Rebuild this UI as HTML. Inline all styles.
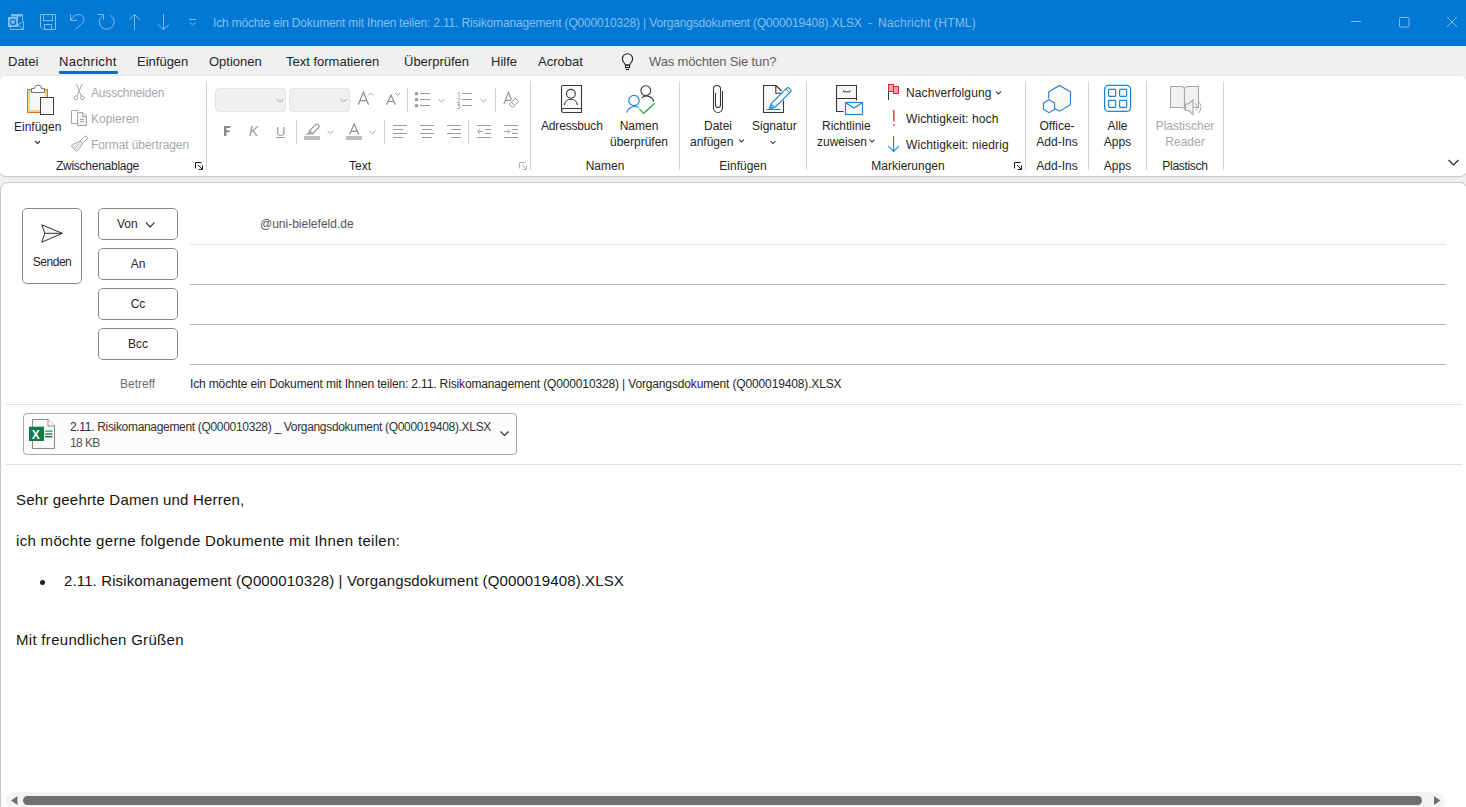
<!DOCTYPE html>
<html><head><meta charset="utf-8">
<style>
*{margin:0;padding:0;box-sizing:border-box}
html,body{width:1466px;height:807px;overflow:hidden;background:#f0f0f0;font-family:"Liberation Sans",sans-serif;color:#262626}
.a{position:absolute;white-space:nowrap;line-height:1}
#title{left:0;top:0;width:1466px;height:46px;background:#0078d4}
#ribbon{left:-1px;top:76px;width:1468px;height:100px;background:#fff;border-radius:7px;box-shadow:0 1px 0 #cbcbcb,0 2px 1px #e6e6e6,0 -1px 0 #e9e9e9}
#compose{left:0;top:182px;width:1468px;height:640px;background:#fff;border:1px solid #c8c8c8;border-radius:8px}
.m{top:55px;font-size:13px;color:#262626}
.r{font-size:12px;color:#262626}
.d{color:#a8a8a8}
.g{top:160px;font-size:12px;color:#262626}
.c{text-align:center}
.btn{position:absolute;border:1px solid #8a8a8a;border-radius:5px;background:#fff}
.ln{position:absolute;height:1px;background:#b3b3b3;left:190px;width:1256px}
.body{font-size:15px;color:#141414;letter-spacing:0.15px}
svg{position:absolute;left:0;top:0}
</style></head><body>
<div id="title" class="a"></div>
<div class="a" style="left:213px;top:17px;font-size:12px;color:#8abeea;letter-spacing:-0.17px">Ich möchte ein Dokument mit Ihnen teilen: 2.11. Risikomanagement (Q000010328) | Vorgangsdokument (Q000019408).XLSX&nbsp; -&nbsp; <span style="letter-spacing:0.2px">Nachricht (HTML)</span></div>

<div class="a m" style="left:8px">Datei</div>
<div class="a m" style="left:59px;color:#1a1a1a;letter-spacing:0.3px">Nachricht</div>
<div class="a" style="left:59px;top:71px;width:59px;height:3px;background:#0f6cbd;border-radius:1px"></div>
<div class="a m" style="left:137px">Einfügen</div>
<div class="a m" style="left:209px">Optionen</div>
<div class="a m" style="left:286px">Text formatieren</div>
<div class="a m" style="left:404px">Überprüfen</div>
<div class="a m" style="left:491px">Hilfe</div>
<div class="a m" style="left:538px">Acrobat</div>
<div class="a m" style="left:649px;color:#5f5f5f;letter-spacing:-0.15px">Was möchten Sie tun?</div>

<div id="ribbon" class="a"></div>

<!-- ribbon separators -->
<div class="a" style="left:206px;top:81px;width:1px;height:89px;background:#d2d2d2"></div>
<div class="a" style="left:530px;top:81px;width:1px;height:89px;background:#d2d2d2"></div>
<div class="a" style="left:679px;top:81px;width:1px;height:89px;background:#d2d2d2"></div>
<div class="a" style="left:806px;top:81px;width:1px;height:89px;background:#d2d2d2"></div>
<div class="a" style="left:1025px;top:81px;width:1px;height:89px;background:#d2d2d2"></div>
<div class="a" style="left:1088px;top:81px;width:1px;height:89px;background:#d2d2d2"></div>
<div class="a" style="left:1146px;top:81px;width:1px;height:89px;background:#d2d2d2"></div>
<div class="a" style="left:1223px;top:81px;width:1px;height:89px;background:#d2d2d2"></div>

<!-- text row seps -->
<div class="a" style="left:407px;top:88px;width:1px;height:24px;background:#d2d2d2"></div>
<div class="a" style="left:495px;top:88px;width:1px;height:24px;background:#d2d2d2"></div>
<div class="a" style="left:296px;top:120px;width:1px;height:24px;background:#d2d2d2"></div>
<div class="a" style="left:384px;top:120px;width:1px;height:24px;background:#d2d2d2"></div>
<div class="a" style="left:468px;top:120px;width:1px;height:24px;background:#d2d2d2"></div>
<!-- Zwischenablage -->
<div class="a r" style="left:14px;top:121px">Einfügen</div>
<div class="a r d" style="left:91px;top:87px;letter-spacing:-0.18px">Ausschneiden</div>
<div class="a r d" style="left:91px;top:113px">Kopieren</div>
<div class="a r d" style="left:91px;top:139px;letter-spacing:-0.08px">Format übertragen</div>
<div class="a g c" style="left:0px;width:195px;letter-spacing:-0.26px">Zwischenablage</div>

<!-- Text group -->
<div class="a" style="left:215px;top:88px;width:71px;height:24px;background:#f0f0f0;border:1px solid #e3e3e3;border-radius:4px"></div>
<div class="a" style="left:289px;top:88px;width:61px;height:24px;background:#f0f0f0;border:1px solid #e3e3e3;border-radius:4px"></div>
<div class="a g c" style="left:300px;width:120px">Text</div>

<!-- Namen -->
<div class="a r" style="left:541px;top:120px;letter-spacing:-0.17px">Adressbuch</div>
<div class="a r c" style="left:600px;top:120px;width:78px">Namen</div>
<div class="a r c" style="left:600px;top:136px;width:78px">überprüfen</div>
<div class="a g c" style="left:555px;width:100px">Namen</div>

<!-- Einfügen -->
<div class="a r" style="left:704px;top:120px">Datei</div>
<div class="a r" style="left:690px;top:136px">anfügen</div>
<div class="a r" style="left:752px;top:120px">Signatur</div>
<div class="a g c" style="left:693px;width:100px">Einfügen</div>

<!-- Markierungen -->
<div class="a r" style="left:822px;top:120px">Richtlinie</div>
<div class="a r" style="left:817px;top:136px">zuweisen</div>
<div class="a r" style="left:906px;top:87px;letter-spacing:0.1px">Nachverfolgung</div>
<div class="a r" style="left:906px;top:113px;letter-spacing:0.1px">Wichtigkeit: hoch</div>
<div class="a r" style="left:906px;top:139px;letter-spacing:0.1px">Wichtigkeit: niedrig</div>
<div class="a g c" style="left:858px;width:100px">Markierungen</div>

<!-- Add-Ins / Apps / Plastisch -->
<div class="a r c" style="left:1026px;top:120px;width:62px">Office-</div>
<div class="a r c" style="left:1026px;top:136px;width:62px">Add-Ins</div>
<div class="a g c" style="left:1026px;width:62px">Add-Ins</div>
<div class="a r c" style="left:1089px;top:120px;width:57px">Alle</div>
<div class="a r c" style="left:1089px;top:136px;width:57px">Apps</div>
<div class="a g c" style="left:1089px;width:57px">Apps</div>
<div class="a r c d" style="left:1147px;top:120px;width:76px">Plastischer</div>
<div class="a r c d" style="left:1147px;top:136px;width:76px">Reader</div>
<div class="a g c" style="left:1147px;width:76px;letter-spacing:-0.3px">Plastisch</div>

<div id="compose" class="a"></div>

<!-- compose -->
<div class="btn" style="left:22px;top:208px;width:60px;height:76px"></div>
<div class="a r c" style="left:22px;top:256px;width:60px;letter-spacing:-0.45px">Senden</div>
<div class="btn" style="left:98px;top:208px;width:80px;height:32px"></div>
<div class="a r" style="left:117px;top:218px">Von</div>
<div class="btn" style="left:98px;top:248px;width:80px;height:32px"></div>
<div class="a r c" style="left:98px;top:258px;width:80px">An</div>
<div class="btn" style="left:98px;top:288px;width:80px;height:32px"></div>
<div class="a r c" style="left:98px;top:298px;width:80px">Cc</div>
<div class="btn" style="left:98px;top:328px;width:80px;height:32px"></div>
<div class="a r c" style="left:98px;top:338px;width:80px">Bcc</div>

<div class="a r" style="left:260px;top:218px;color:#555">@uni-bielefeld.de</div>
<div class="ln" style="top:244px;background:#e3e3e3"></div>
<div class="ln" style="top:284px"></div>
<div class="ln" style="top:324px"></div>
<div class="ln" style="top:364px"></div>
<div class="a r" style="left:120px;top:378px;color:#6b6b6b">Betreff</div>
<div class="a r" style="left:190px;top:378px;color:#262626;letter-spacing:-0.145px">Ich möchte ein Dokument mit Ihnen teilen: 2.11. Risikomanagement (Q000010328) | Vorgangsdokument (Q000019408).XLSX</div>
<div class="a" style="left:6px;top:404px;width:1456px;height:1px;background:#e1e1e1"></div>

<div class="a" style="left:23px;top:413px;width:494px;height:42px;border:1px solid #a8a8a8;border-radius:4px;background:#fcfcfc"></div>
<div class="a r" style="left:70px;top:421px;color:#333;letter-spacing:-0.32px">2.11. Risikomanagement (Q000010328) _ Vorgangsdokument (Q000019408).XLSX</div>
<div class="a r" style="left:70px;top:437px;color:#555;letter-spacing:-0.6px">18 KB</div>
<div class="a" style="left:6px;top:464px;width:1456px;height:1px;background:#e1e1e1"></div>

<div class="a body" style="left:16px;top:492px;letter-spacing:0.19px">Sehr geehrte Damen und Herren,</div>
<div class="a body" style="left:16px;top:533px;letter-spacing:0.31px">ich möchte gerne folgende Dokumente mit Ihnen teilen:</div>
<div class="a" style="left:40px;top:580px;width:5px;height:5px;border-radius:50%;background:#1f1f1f"></div>
<div class="a body" style="left:64px;top:573px;letter-spacing:0.13px">2.11. Risikomanagement (Q000010328) | Vorgangsdokument (Q000019408).XLSX</div>
<div class="a body" style="left:16px;top:632px;letter-spacing:0.3px">Mit freundlichen Grüßen</div>

<!-- scrollbar -->
<div class="a" style="left:6px;top:792px;width:1439px;height:18px;background:#f3f3f3;border-radius:9px"></div>
<div class="a" style="left:23px;top:796px;width:1399px;height:9px;background:#707070;border-radius:5px"></div>

<svg width="1466" height="807" viewBox="0 0 1466 807">
<!-- title bar icons -->
<g fill="none" stroke="#80bceb" stroke-width="1">
  <path d="M11.5,16.5 V14.5 H22.5 V21"/>
  <path d="M11.5,15.5 H22.5" stroke-width="2"/>
  <path d="M17.5,14.5 V17" />
  <path d="M10.5,27 V29.5 H23.5 V21.5 L17.5,25"/>
  <path d="M18,25 L23.5,29.5"/>
</g>
<rect x="8" y="17" width="10" height="10" fill="#80bceb"/>
<circle cx="13" cy="22" r="2.6" fill="none" stroke="#0078d4" stroke-width="1.3"/>
<g fill="none" stroke="#80bceb" stroke-width="1">
  <path d="M40.5,14.5 H55.5 V29.5 H43 L40.5,27 Z"/>
  <path d="M43.5,14.5 V20.5 H52.5 V14.5"/>
  <path d="M44.5,29.5 V24.5 H51.5 V29.5"/>
  <path d="M70.5,14 V20.3 H77"/>
  <path d="M71,19.8 C73,16.3 75.5,14.5 78.5,14.5 C81.5,14.5 84,16.8 84,19.3 C84,21.3 83,22.8 81.5,24.2 L75.5,29.5"/>
  <path d="M110.3,15.3 A7.4,7.4 0 1 1 101.5,16.5"/>
  <path d="M98,14.5 H103.5 V20"/>
  <path d="M134.5,14.5 V30 M129.2,19.7 L134.5,14.5 L139.8,19.7"/>
  <path d="M163.5,14 V29.7 M158,24.4 L163.5,29.7 L169,24.4"/>
  <path d="M189,19.5 H196 M189.5,22.2 L192.6,25 L195.7,22.2"/>
  <path d="M1351,21.5 H1361"/>
  <rect x="1399.5" y="17.5" width="9.5" height="9.5" rx="1"/>
  <path d="M1447,17 L1457,27 M1457,17 L1447,27"/>
</g>

<!-- lightbulb -->
<path d="M625.5,65 L623.8,62.3 A5.1,5.1 0 1 1 631.2,62.3 L629.5,65 Z" fill="none" stroke="#1f1f1f" stroke-width="1.1"/>
<rect x="625.5" y="65.2" width="4" height="2.4" fill="none" stroke="#1f1f1f" stroke-width="1.1"/>
<path d="M626,69.5 H629" stroke="#1f1f1f" stroke-width="1.1"/>
<!-- Einfuegen paste -->
<rect x="27.5" y="89.5" width="20" height="23" fill="#f7f7f7" stroke="#e07512" stroke-width="1"/>
<rect x="29" y="91" width="17" height="20" fill="none" stroke="#f7d27c" stroke-width="2"/>
<path d="M31.5,88.5 H34.5 A3.5,3.5 0 0 1 41.5,88.5 H44.5 V92.5 H31.5 Z" fill="#fff" stroke="#737373"/>
<rect x="40.5" y="97.5" width="13" height="17" fill="#f9f9f9" stroke="#404040"/>
<path d="M35,141 L37.5,143.5 L40,141" fill="none" stroke="#333" stroke-width="1.1"/>

<!-- scissors / copy / brush -->
<g fill="none" stroke="#a6a6a6" stroke-width="1">
  <path d="M76.5,84 L81.2,96 M82,84 L77.2,96"/>
  <circle cx="75.8" cy="97.8" r="1.9"/>
  <circle cx="82.4" cy="97.8" r="1.9"/>
  <path d="M78,110.5 H71.5 V123.5 H77" />
  <path d="M77.5,112.5 H83 L86.5,116 V125.5 H77.5 Z" fill="#f4f4f4"/>
  <path d="M82.5,112.5 V116.5 H86.5"/>
  <path d="M80,119.5 H84 M80,121.5 H84"/>
  <path d="M84.6,136.6 Q85.8,135.4 87,136.6 Q88.2,137.8 87,139 L82.6,143.4 L80.2,141 Z"/>
  <path d="M80.2,141 L82.6,143.4 L81.6,145.2 Q79.6,148.8 76.6,151.4 L71.2,146 Q73.8,143.2 78.2,142.2 Z" fill="#ececec"/>
  <path d="M74,148.8 L79.5,143.5" stroke="#c4c4c4"/>
</g>
<path d="M1448.5,160 L1453.5,165 L1458.5,160" fill="none" stroke="#262626" stroke-width="1.2"/>

<!-- Text group icons -->
<g fill="none" stroke="#909090" stroke-width="1.2">
  <path d="M277,99.5 L280,102 L283,99.5" stroke="#a0a0a0" stroke-width="1"/>
  <path d="M340.5,99.3 L343.5,101.8 L346.5,99.3" stroke="#a0a0a0" stroke-width="1"/>
  <path d="M358.3,104.8 L363.4,92.2 L368.6,104.8 M360.2,100.6 H366.6"/>
  <path d="M368.2,95.5 L370.7,93 L373.2,95.5" stroke="#a0a0a0" stroke-width="1"/>
  <path d="M386.5,104.8 L391,95.2 L395.5,104.8 M388.2,101.5 H393.8"/>
  <path d="M395,93 L397.5,95.5 L400,93" stroke="#a0a0a0" stroke-width="1"/>
  <path d="M438.6,99.3 L441.5,101.8 L444.4,99.3" stroke="#a0a0a0" stroke-width="1"/>
  <path d="M480.5,99.3 L483.5,101.8 L486.5,99.3" stroke="#a0a0a0" stroke-width="1"/>
  <path d="M327.6,131 L330.5,133.7 L333.4,131" stroke="#a0a0a0" stroke-width="1"/>
  <path d="M369.5,131 L372.4,133.7 L375.3,131" stroke="#a0a0a0" stroke-width="1"/>
  <path d="M349.6,134.6 L354.1,124.1 L358.6,134.6 M351.2,131.3 H357"/>
  <path d="M309.6,130.6 L315.6,124.6 Q316.8,123.4 318,124.6 L318.6,125.2 Q319.8,126.4 318.6,127.6 L312.6,133.6 Z" stroke-width="1.1"/><path d="M309.6,130.6 L312.6,133.6 L311,134.8 H305.2 Q307.8,133.6 309.6,130.6 Z" fill="#ababab" stroke="none"/>
  <path d="M503.8,104.4 L508.4,92.4 L511.5,99.8 M505.2,100.3 H510.8"/>
  <path d="M515.3,98.3 L518.8,101.6 L512.4,107.6 L509.2,104.3 Z" stroke-width="1"/>
  <path d="M511.4,102.3 L514.6,105.5" stroke-width="1"/>
</g>
<g fill="#9a9a9a">
  <rect x="415" y="92.2" width="3" height="3"/>
  <rect x="415" y="98.2" width="3" height="3"/>
  <rect x="415" y="104.2" width="3" height="3"/>
  <rect x="420" y="93" width="10" height="1"/>
  <rect x="420" y="99" width="10" height="1"/>
  <rect x="420" y="105" width="10" height="1"/>
  <rect x="462" y="93" width="10" height="1"/>
  <rect x="462" y="99" width="10" height="1"/>
  <rect x="462" y="105" width="10" height="1"/>
  <rect x="304" y="136" width="16" height="4" fill="#bdbdbd"/>
  <rect x="346" y="136" width="16" height="4" fill="#bdbdbd"/>
  <rect x="276" y="137" width="9" height="1"/>
  <!-- align -->
  <rect x="393" y="125" width="14" height="1"/><rect x="393" y="129" width="10" height="1"/><rect x="393" y="133" width="14" height="1"/><rect x="393" y="137" width="10" height="1"/>
  <rect x="420" y="125" width="14" height="1"/><rect x="422" y="129" width="10" height="1"/><rect x="420" y="133" width="14" height="1"/><rect x="422" y="137" width="10" height="1"/>
  <rect x="447" y="125" width="14" height="1"/><rect x="451" y="129" width="10" height="1"/><rect x="447" y="133" width="14" height="1"/><rect x="451" y="137" width="10" height="1"/>
  <rect x="477" y="125" width="14" height="1"/><rect x="485" y="129" width="6" height="1"/><rect x="485" y="133" width="6" height="1"/><rect x="477" y="137" width="14" height="1"/>
  <rect x="504" y="125" width="14" height="1"/><rect x="512" y="129" width="6" height="1"/><rect x="512" y="133" width="6" height="1"/><rect x="504" y="137" width="14" height="1"/>
</g>
<g fill="none" stroke="#a8a8a8" stroke-width="1">
  <path d="M477.5,131.5 H483 M480,129 L477.5,131.5 L480,134"/>
  <path d="M504,131.5 H510 M507.5,129 L510,131.5 L507.5,134"/>
</g>
<path d="M457.6,93.2 L459,92.3 V97.2 M457.3,98.8 Q458.5,97.7 459.7,98.5 Q460.4,99.6 459,100.9 L457.3,102.8 H460.4 M457.3,104.3 H460 L458.5,106 Q460.6,106.2 460.3,107.6 Q459.6,109.1 457.2,108.5" fill="none" stroke="#a0a0a0" stroke-width="0.9"/>
<g font-family="Liberation Sans" fill="#8a8a8a">
  
  <text x="249" y="136" font-size="14" font-style="italic" fill="#9a9a9a">K</text>
  <text x="276" y="135.5" font-size="13" fill="#9a9a9a">U</text>
</g>
<path d="M224,126 H230.3 V128.1 H226.5 V130.2 H229.8 V132.3 H226.5 V136 H224 Z" fill="#8a8a8a"/>
<!-- dialog launchers -->
<g fill="none" stroke="#1a1a1a" stroke-width="1">
  <path d="M195.5,168.5 V162.5 H201.5 M198,165 L202,169 M198.5,169.5 H202.5 V165.5"/>
  <path d="M1014.5,168.5 V162.5 H1020.5 M1017,165 L1021,169 M1017.5,169.5 H1021.5 V165.5"/>
</g>
<g fill="none" stroke="#b5b5b5" stroke-width="1">
  <path d="M519.5,168.5 V162.5 H525.5 M522,165 L526,169 M522.5,169.5 H526.5 V165.5"/>
</g>

<!-- Namen icons -->
<g fill="none" stroke="#383838" stroke-width="1.1">
  <path d="M563,85.5 H581.5 V112.5 H563 A1.8,1.8 0 0 1 561.5,110.7 V87 A1.5,1.5 0 0 1 563,85.5 Z" fill="#fafafa"/>
  <path d="M561.5,110.5 A2,2 0 0 1 563.5,108.5 H581.5"/>
  <circle cx="570.9" cy="93.8" r="4.4"/>
  <path d="M564.3,104.8 A6.7,6.7 0 0 1 577.5,104.8"/>
  <circle cx="645.8" cy="90.6" r="4.9"/>
  <path d="M641.6,97.8 A7.5,7.5 0 0 1 653.8,101.8"/>
</g>
<g fill="none" stroke="#1e88d6" stroke-width="1.2">
  <circle cx="634" cy="100.5" r="5.2"/>
  <path d="M626.5,112.7 A8.5,8.5 0 0 1 638.8,107.6"/>
</g>
<path d="M639.3,108.8 L643.6,113.3 L654.7,103.2" fill="none" stroke="#2fa84f" stroke-width="1.2"/>

<!-- Einfuegen group icons -->
<path d="M715.5,93 V105 A2.5,2.5 0 0 0 720.5,105 V89 A3.5,3.5 0 0 0 713.5,89 V108 A4.5,4.5 0 0 0 722.5,108 V91" fill="none" stroke="#383838" stroke-width="1.1"/>
<path d="M763.5,85.5 H776 L781.5,91 L783.5,93 V112.5 H763.5 Z" fill="#f9f9f9" stroke="none"/>
<path d="M776,85.5 H763.5 V112.5 H783.5 V100.5 M776,85.5 L781.5,91 M775.8,85.5 V93.3 H781.5" fill="none" stroke="#383838" stroke-width="1.1"/>
<path d="M769.5,108.6 L771.5,103.3 L786.5,88.3 Q788,86.8 789.5,88.3 L790.3,89.1 Q791.8,90.6 790.3,92.1 L775.3,107 Z" fill="#fafafa" stroke="#2186d6" stroke-width="1.1"/>
<path d="M769.5,108.6 L771.3,104 L774.7,107.3 Z" fill="#8cc0ec" stroke="#2186d6" stroke-width="1"/>
<path d="M786,89 L789.8,92.8" stroke="#2186d6" stroke-width="1"/>
<path d="M766.5,109.5 H780.5" stroke="#2186d6" stroke-width="1.1"/>
<g fill="none" stroke="#262626" stroke-width="1.05">
  <path d="M739,139.5 L741.5,142 L744,139.5"/>
  <path d="M770.5,141 L773,143.5 L775.5,141"/>
  <path d="M869.5,139.5 L872,142 L874.5,139.5"/>
  <path d="M996,91.5 L998.5,94 L1001,91.5"/>
</g>

<!-- Markierungen -->
<path d="M843.5,111.5 H836.5 V85.5 H856.5 V100.5 M836.5,98.5 H856.5" fill="#f7f7f7" stroke="#383838" stroke-width="1.1"/>
<path d="M843.5,90.5 V91.8 H850 V90.5" fill="none" stroke="#383838" stroke-width="1"/>
<rect x="845.5" y="102.5" width="17" height="12" fill="#f7f7f7" stroke="#1e88d6" stroke-width="1.2"/>
<path d="M846,103 L854,108 L862,103" fill="none" stroke="#1e88d6" stroke-width="1.2"/>
<path d="M888.5,85 V100" stroke="#383838" stroke-width="1"/>
<rect x="888.5" y="84.5" width="5" height="7" fill="#f6a3aa" stroke="#d92b2b" stroke-width="1"/>
<rect x="893.5" y="86.5" width="5" height="7" fill="#f6a3aa" stroke="#d92b2b" stroke-width="1"/>
<rect x="893" y="110" width="1.6" height="11.5" fill="#e8434a"/>
<rect x="893" y="124.2" width="1.6" height="1.7" fill="#e8434a"/>
<path d="M893.6,135.8 V151.3 M888.3,146.2 L893.6,151.5 L898.9,146.2" fill="none" stroke="#1e88d6" stroke-width="1.1"/>

<!-- Add-ins -->
<path d="M1048.7,98.5 V91.8 L1059.5,85.5 L1070.5,91.8 V104.8 L1059.5,111.2 L1055,108.7" fill="#fafafa" stroke="#1e7ed0" stroke-width="1.1"/>
<path d="M1049,99.7 L1054.6,103 V109.3 L1049,112.6 L1043.4,109.3 V103 Z" fill="#fafafa" stroke="#1e7ed0" stroke-width="1.1"/>
<!-- Apps -->
<rect x="1104.6" y="85.4" width="26" height="26" rx="4" fill="#fafafa" stroke="#1e88d6" stroke-width="1.3"/>
<g fill="none" stroke="#1e88d6" stroke-width="1.2">
  <rect x="1108.6" y="89.4" width="7" height="7" rx="0.8"/>
  <rect x="1119.6" y="89.4" width="7" height="7" rx="0.8"/>
  <rect x="1108.6" y="100.4" width="7" height="7" rx="0.8"/>
  <rect x="1119.6" y="100.4" width="7" height="7" rx="0.8"/>
</g>
<!-- Reader -->
<path d="M1170.5,86.5 H1181 Q1184,86.5 1184.5,89 V108.5 Q1183.5,107.5 1181,107.5 H1170.5 Z" fill="#f1f1f1" stroke="#a8a8a8" stroke-width="1.1"/>
<path d="M1184.5,89 Q1185,86.5 1188,86.5 H1198.5 V107.5 H1188 Q1185.5,107.5 1184.5,108.5 Z" fill="#f1f1f1" stroke="#a8a8a8" stroke-width="1.1"/>
<path d="M1185.5,104 H1188.5 L1193,100 V114.5 L1188.5,110.5 H1185.5 Z" fill="#f1f1f1" stroke="#a8a8a8" stroke-width="1.1"/>
<path d="M1195.5,103.5 A5.5,5.5 0 0 1 1195.5,111 M1198.5,101.5 A8,8 0 0 1 1198.5,113" fill="none" stroke="#b0b0b0" stroke-width="1"/>

<!-- compose icons -->
<path d="M41.8,224.8 L62.3,233.3 L41.8,242.2 L44.8,233.3 Z M44.8,233.3 H62.3" fill="#f5f5f5" stroke="#333" stroke-width="1"/>
<path d="M146,222.6 L150.2,226.8 L154.4,222.6" fill="none" stroke="#262626" stroke-width="1.2"/>
<!-- excel -->
<path d="M32.5,419.5 H48 L54.5,426 V448.5 H32.5 Z" fill="#f9f9f9" stroke="#8a8a8a" stroke-width="1"/>
<path d="M48,419.5 V426 H54.5" fill="#fff" stroke="#8a8a8a" stroke-width="1"/>
<rect x="29" y="426.7" width="15" height="14.3" fill="#107c41"/>
<text x="31.8" y="438.7" font-family="Liberation Sans" font-size="12" font-weight="bold" fill="#fff">X</text>
<rect x="45" y="430.5" width="7.5" height="1.3" fill="#21a366"/>
<rect x="45" y="433.3" width="7.5" height="1.3" fill="#107c41"/>
<rect x="45" y="436.1" width="7.5" height="1.3" fill="#185c37"/>
<path d="M500.5,431.5 L504.5,435.5 L508.5,431.5" fill="none" stroke="#333" stroke-width="1.2"/>
<!-- scrollbar arrows -->
<path d="M11,800.5 L17.5,796 V805 Z" fill="#707070"/>
<path d="M1440.5,800.5 L1434,796 V805 Z" fill="#707070"/>
</svg>
</body></html>
